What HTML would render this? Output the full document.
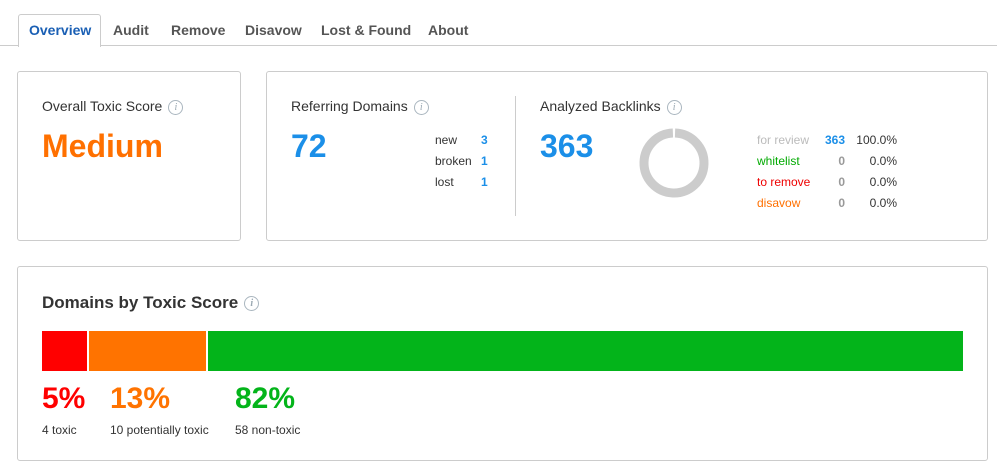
<!DOCTYPE html><html><head><style>
body{margin:0;width:997px;height:472px;background:#fff;font-family:"Liberation Sans",sans-serif;position:relative;overflow:hidden;color:#333}
.a{position:absolute;white-space:nowrap}
.box{position:absolute;border:1px solid #ccc;border-radius:3px;box-sizing:border-box}
.tab{position:absolute;top:22px;font-size:14px;font-weight:bold;color:#555}
.i{display:inline-block;width:13px;height:13px;border:1px solid #aab6bf;border-radius:50%;color:#9aa8b2;font-size:10px;font-style:italic;font-family:"Liberation Serif",serif;text-align:center;line-height:13px;vertical-align:middle;margin-left:6px}
.t{font-size:14px;color:#333}
.s{font-size:12px}
</style></head><body>
<div class="a" style="left:0;top:45px;width:997px;height:1px;background:#ccc"></div>
<div class="a" style="left:18px;top:14px;width:83px;height:33px;border:1px solid #ccc;border-bottom:none;border-radius:3px 3px 0 0;background:#fff;box-sizing:border-box"></div>
<div class="tab" style="left:29px;color:#1a5fb4">Overview</div>
<div class="tab" style="left:113px">Audit</div>
<div class="tab" style="left:171px">Remove</div>
<div class="tab" style="left:245px">Disavow</div>
<div class="tab" style="left:321px">Lost &amp; Found</div>
<div class="tab" style="left:428px">About</div>

<div class="box" style="left:17px;top:71px;width:224px;height:170px"></div>
<div class="a t" style="left:42px;top:98px">Overall Toxic Score<span class="i">i</span></div>
<div class="a" style="left:42px;top:128px;font-size:32px;font-weight:bold;color:#ff7000">Medium</div>

<div class="box" style="left:266px;top:71px;width:722px;height:170px"></div>
<div class="a t" style="left:291px;top:98px">Referring Domains<span class="i">i</span></div>
<div class="a" style="left:291px;top:128px;font-size:32px;font-weight:bold;color:#1b8fe8">72</div>
<div class="a s" style="left:435px;top:130px;line-height:21px">new<br>broken<br>lost</div>
<div class="a s" style="left:481px;top:130px;line-height:21px;font-weight:bold;color:#1b8fe8">3<br>1<br>1</div>
<div class="a" style="left:515px;top:96px;width:1px;height:120px;background:#ccc"></div>
<div class="a t" style="left:540px;top:98px">Analyzed Backlinks<span class="i">i</span></div>
<div class="a" style="left:540px;top:128px;font-size:32px;font-weight:bold;color:#1b8fe8">363</div>
<svg class="a" style="left:638px;top:127px" width="72" height="72"><circle cx="36" cy="36" r="30" fill="none" stroke="#ccc" stroke-width="9" stroke-dasharray="186 2.5" transform="rotate(-88 36 36)"/></svg>
<div class="a s" style="left:757px;top:130px;line-height:21px"><span style="color:#bbb">for review</span><br><span style="color:#0a0">whitelist</span><br><span style="color:#e00">to remove</span><br><span style="color:#ff7000">disavow</span></div>
<div class="a s" style="left:820px;top:130px;width:25px;text-align:right;line-height:21px;font-weight:bold;color:#999"><span style="color:#1b8fe8">363</span><br>0<br>0<br>0</div>
<div class="a s" style="left:850px;top:130px;width:47px;text-align:right;line-height:21px">100.0%<br>0.0%<br>0.0%<br>0.0%</div>

<div class="box" style="left:17px;top:266px;width:971px;height:195px"></div>
<div class="a" style="left:42px;top:293px;font-size:17px;font-weight:bold;color:#333">Domains by Toxic Score<span class="i">i</span></div>
<div class="a" style="left:42px;top:331px;width:45px;height:40px;background:#ff0000"></div>
<div class="a" style="left:89px;top:331px;width:117px;height:40px;background:#ff7300"></div>
<div class="a" style="left:208px;top:331px;width:755px;height:40px;background:#03b41a"></div>
<div class="a" style="left:42px;top:382px;font-size:30px;font-weight:bold;color:#ff0000">5%</div>
<div class="a" style="left:110px;top:382px;font-size:30px;font-weight:bold;color:#ff7300">13%</div>
<div class="a" style="left:235px;top:382px;font-size:30px;font-weight:bold;color:#03b41a">82%</div>
<div class="a s" style="left:42px;top:423px">4 toxic</div>
<div class="a s" style="left:110px;top:423px">10 potentially toxic</div>
<div class="a s" style="left:235px;top:423px">58 non-toxic</div>
</body></html>
